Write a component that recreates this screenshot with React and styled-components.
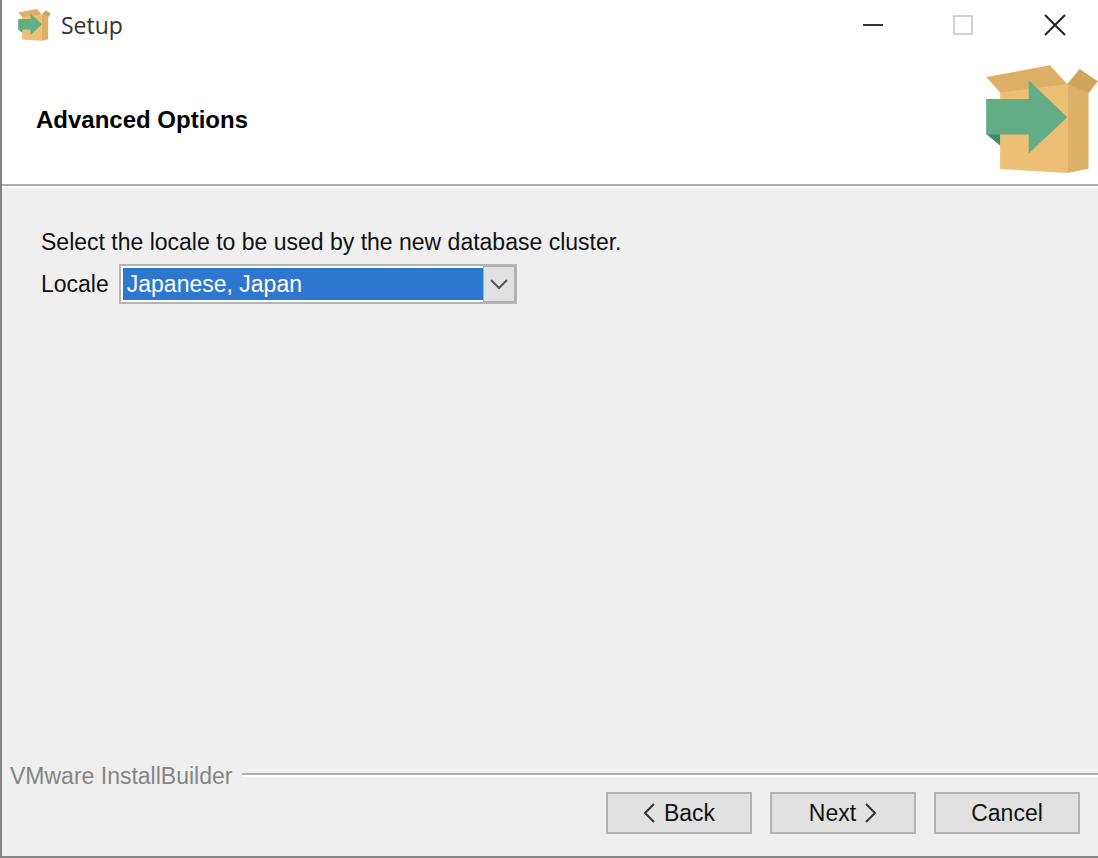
import React, { useState } from "react";
import styled, { createGlobalStyle } from "styled-components";

const GlobalStyle = createGlobalStyle`
  *,
  *::before,
  *::after {
    box-sizing: border-box;
  }

  body {
    margin: 0;
    font-family: "Liberation Sans", "Noto Sans CJK JP", sans-serif;
    font-size: 23px;
    line-height: 32px;
    color: #111;
  }

  button,
  select {
    font: inherit;
    color: inherit;
  }
`;

const Window = styled.div`
  display: flex;
  flex-direction: column;
  min-height: 100vh;
  border-left: 2px solid #828282;
  border-bottom: 2px solid #858585;
  background-color: #efefef;
`;

const TitleBar = styled.header`
  display: flex;
  align-items: center;
  height: 50px;
  padding-left: 16px;
  background-color: #fff;
`;

const Title = styled.span`
  flex: 1;
  padding-left: 10px;
  font-family: "Open Sans", sans-serif;
  color: #333;
`;

const WindowButton = styled.button`
  display: flex;
  align-items: center;
  justify-content: center;
  width: 90px;
  height: 50px;
  padding: 0;
  border: none;
  background: none;

  &:last-child {
    padding-left: 4px;
  }
`;

const Banner = styled.div`
  display: flex;
  align-items: center;
  justify-content: space-between;
  height: 136px;
  padding-top: 5px;
  padding-left: 34px;
  border-bottom: 2px solid #adadad;
  background-color: #fff;
`;

const Heading = styled.h1`
  margin: 0;
  font-size: 24px;
  color: #000;
`;

const Main = styled.main`
  flex: 1;
  padding: 38px 39px;
  border-top: 2px solid #fafafa;
`;

const Message = styled.p`
  margin: 0 0 6px;
`;

const Field = styled.div`
  display: flex;
  align-items: center;
  gap: 10px;
`;

const SelectBox = styled.div`
  position: relative;
  display: flex;
  width: 398px;
  height: 40px;
  padding: 2px;
  border: 2px solid #b0b3b8;
  background-color: #fff;
`;

const Select = styled.select`
  flex: 1;
  padding: 0 36px 0 4px;
  border: none;
  border-radius: 0;
  outline: none;
  appearance: none;
  background-color: #2e77d0;
  color: #fff;
`;

const Arrow = styled.span`
  position: absolute;
  top: 0;
  right: 0;
  bottom: 0;
  display: flex;
  align-items: center;
  justify-content: center;
  width: 32px;
  border: 1px solid #adadad;
  background-color: #e1e1e1;
  pointer-events: none;
`;

const Brand = styled.div`
  display: flex;
  align-items: center;
  gap: 10px;
  padding-left: 8px;
  color: #858585;

  &::after {
    content: "";
    flex: 1;
    height: 4px;
    margin-bottom: 2px;
    border-top: 2px solid #adadad;
    border-bottom: 2px solid #fff;
  }
`;

const Footer = styled.footer`
  display: flex;
  justify-content: flex-end;
  gap: 18px;
  padding: 0 18px 22px;
`;

const Button = styled.button`
  display: flex;
  align-items: center;
  justify-content: center;
  gap: 8px;
  width: 146px;
  height: 42px;
  padding: 0;
  border: 2px solid #b2b2b2;
  background-color: #e1e1e1;
`;

const BoxIcon = ({ width, height }) => (
  <svg width={width} height={height} viewBox="0 0 336 328" aria-hidden="true">
    <path d="M42 64 244 54V325L42 313Z" fill="#edbf75" />
    <path d="M244 56 308 84V312L244 325Z" fill="#ddb067" />
    <path d="M0 36 192 1 244 57 42 83Z" fill="#ddb067" />
    <path d="M244 57 281 12 336 49 308 85Z" fill="#d0a45d" />
    <path d="M0 208H42V242Z" fill="#43896a" />
    <path d="M0 102H128V46L244 157 128 266V209H0Z" fill="#62ad86" />
  </svg>
);

const Chevron = ({ direction }) => {
  const d = {
    left: "M11 1 2 10 11 19",
    right: "M2 1 11 10 2 19"
  }[direction];

  return (
    <svg width="13" height="20" fill="none" stroke="#333" strokeWidth="2" aria-hidden="true">
      <path d={d} />
    </svg>
  );
};

const locales = ["Japanese, Japan"];

const App = () => {
  const [locale, setLocale] = useState(locales[0]);

  return (
    <>
      <GlobalStyle />
      <Window>
        <TitleBar>
          <BoxIcon width={33} height={32} />
          <Title>Setup</Title>
          <WindowButton aria-label="Minimize">
            <svg width="22" height="22" stroke="#333" strokeWidth="2">
              <path d="M1 11H21" />
            </svg>
          </WindowButton>
          <WindowButton aria-label="Maximize" disabled>
            <svg width="22" height="22" fill="none" stroke="#d2d2d2" strokeWidth="2">
              <path d="M2 2H20V20H2Z" />
            </svg>
          </WindowButton>
          <WindowButton aria-label="Close">
            <svg width="22" height="22" stroke="#222" strokeWidth="2">
              <path d="M1 1 21 21M21 1 1 21" />
            </svg>
          </WindowButton>
        </TitleBar>
        <Banner>
          <Heading>Advanced Options</Heading>
          <BoxIcon width={112} height={109} />
        </Banner>
        <Main>
          <Message>Select the locale to be used by the new database cluster.</Message>
          <Field>
            <label htmlFor="locale">Locale</label>
            <SelectBox>
              <Select
                id="locale"
                value={locale}
                onChange={event => setLocale(event.target.value)}
              >
                {locales.map(name => (
                  <option key={name}>{name}</option>
                ))}
              </Select>
              <Arrow>
                <svg width="18" height="12" fill="none" stroke="#555" strokeWidth="2">
                  <path d="M1 2 9 10 17 2" />
                </svg>
              </Arrow>
            </SelectBox>
          </Field>
        </Main>
        <Brand>VMware InstallBuilder</Brand>
        <Footer>
          <Button>
            <Chevron direction="left" />
            Back
          </Button>
          <Button>
            Next
            <Chevron direction="right" />
          </Button>
          <Button>Cancel</Button>
        </Footer>
      </Window>
    </>
  );
};

export default App;
